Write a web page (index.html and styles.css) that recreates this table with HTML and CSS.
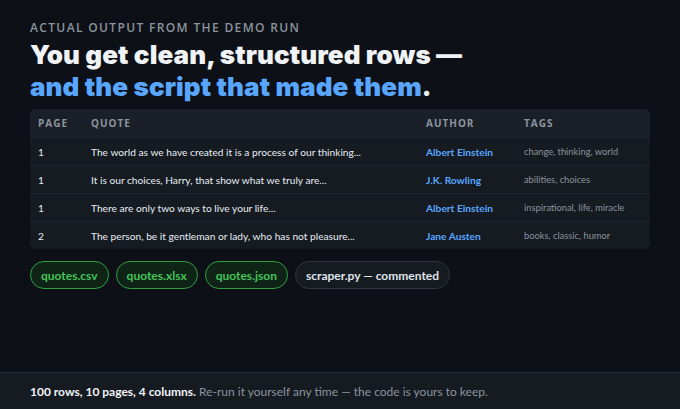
FILE: index.html
```html
<!DOCTYPE html>
<html>
<head>
<meta charset="utf-8">
<link rel="stylesheet" href="styles.css">
</head>
<body>
<div class="page">
  <main class="main">
    <div class="eyebrow">ACTUAL OUTPUT FROM THE DEMO RUN</div>
    <h1 class="title">You get clean, structured rows —<br><span class="accent">and the script that made them</span>.</h1>
    <div class="table">
      <div class="row head">
        <div class="c page-c">PAGE</div>
        <div class="c quote-c">QUOTE</div>
        <div class="c author-c">AUTHOR</div>
        <div class="c tags-c">TAGS</div>
      </div>
      <div class="row">
        <div class="c page-c">1</div>
        <div class="c quote-c">The world as we have created it is a process of our thinking...</div>
        <div class="c author-c">Albert Einstein</div>
        <div class="c tags-c">change, thinking, world</div>
      </div>
      <div class="row">
        <div class="c page-c">1</div>
        <div class="c quote-c">It is our choices, Harry, that show what we truly are...</div>
        <div class="c author-c">J.K. Rowling</div>
        <div class="c tags-c">abilities, choices</div>
      </div>
      <div class="row">
        <div class="c page-c">1</div>
        <div class="c quote-c">There are only two ways to live your life...</div>
        <div class="c author-c">Albert Einstein</div>
        <div class="c tags-c">inspirational, life, miracle</div>
      </div>
      <div class="row">
        <div class="c page-c">2</div>
        <div class="c quote-c">The person, be it gentleman or lady, who has not pleasure...</div>
        <div class="c author-c">Jane Austen</div>
        <div class="c tags-c">books, classic, humor</div>
      </div>
    </div>
    <div class="pills">
      <span class="pill green">quotes.csv</span>
      <span class="pill green">quotes.xlsx</span>
      <span class="pill green">quotes.json</span>
      <span class="pill gray">scraper.py — commented</span>
    </div>
  </main>
  <footer class="footer"><b>100 rows, 10 pages, 4 columns.</b> Re-run it yourself any time — the code is yours to keep.</footer>
</div>
</body>
</html>
```
FILE: styles.css
```css
* { box-sizing: border-box; }
html, body { margin: 0; padding: 0; }
body {
  background: #0d1117;
  font-family: Lato, "Open Sans", sans-serif;
  color: #e6edf3;
  width: 680px;
  height: 409px;
  overflow: hidden;
}
.page {
  height: 409px;
  display: flex;
  flex-direction: column;
}
.main {
  flex: 1;
  padding: 20px 30px 0 30px;
}
.eyebrow {
  font-family: "Open Sans", sans-serif;
  font-size: 12px;
  font-weight: 600;
  letter-spacing: 1.35px;
  color: #8b949e;
  line-height: 16px;
}
.title {
  margin: 3px 0 6px 0;
  font-family: Inter, "Open Sans", sans-serif;
  font-weight: 900;
  font-size: 26px;
  line-height: 32px;
  color: #f0f3f6;
  letter-spacing: 0.1px;
}
.accent { color: #58a6ff; }
.table {
  background: #161b22;
  border-radius: 6px;
  overflow: hidden;
  width: 620px;
}
.row {
  display: flex;
  height: 28px;
  align-items: center;
  border-top: 1px solid #1f252d;
  font-size: 10.2px;
}
.row.head {
  border-top: none;
  background: #1b2028;
  font-family: "Open Sans", sans-serif;
  font-size: 10px;
  font-weight: 700;
  letter-spacing: 1px;
  color: #8b949e;
}
.c { padding-left: 8px; white-space: nowrap; overflow: hidden; }
.page-c { width: 53px; }
.quote-c { width: 335px; }
.author-c { width: 98px; }
.tags-c { flex: 1; }
.row:not(.head) .page-c, .row:not(.head) .quote-c { color: #e6edf3; }
.row:not(.head) .author-c { color: #58a6ff; font-weight: 700; }
.row:not(.head) .tags-c { color: #8b949e; font-size: 9.3px; }
.pills {
  display: flex;
  gap: 7px;
  margin-top: 12px;
}
.pill {
  height: 28px;
  border-radius: 14px;
  padding: 0 10px;
  display: flex;
  align-items: center;
  font-size: 12px;
  font-weight: 700;
}
.green {
  background: #0f2417;
  border: 1.5px solid #2ea043;
  color: #46c35a;
}
.gray {
  background: #161b22;
  border: 1.5px solid #30363d;
  color: #dfe4ea;
}
.footer {
  height: 37px;
  background: #161b22;
  border-top: 1px solid #262c34;
  padding: 0 30px;
  display: flex;
  align-items: center;
  font-size: 12px;
  color: #8b949e;
  white-space: pre;
}
.footer b { color: #f0f3f6; font-weight: 700; }
```
